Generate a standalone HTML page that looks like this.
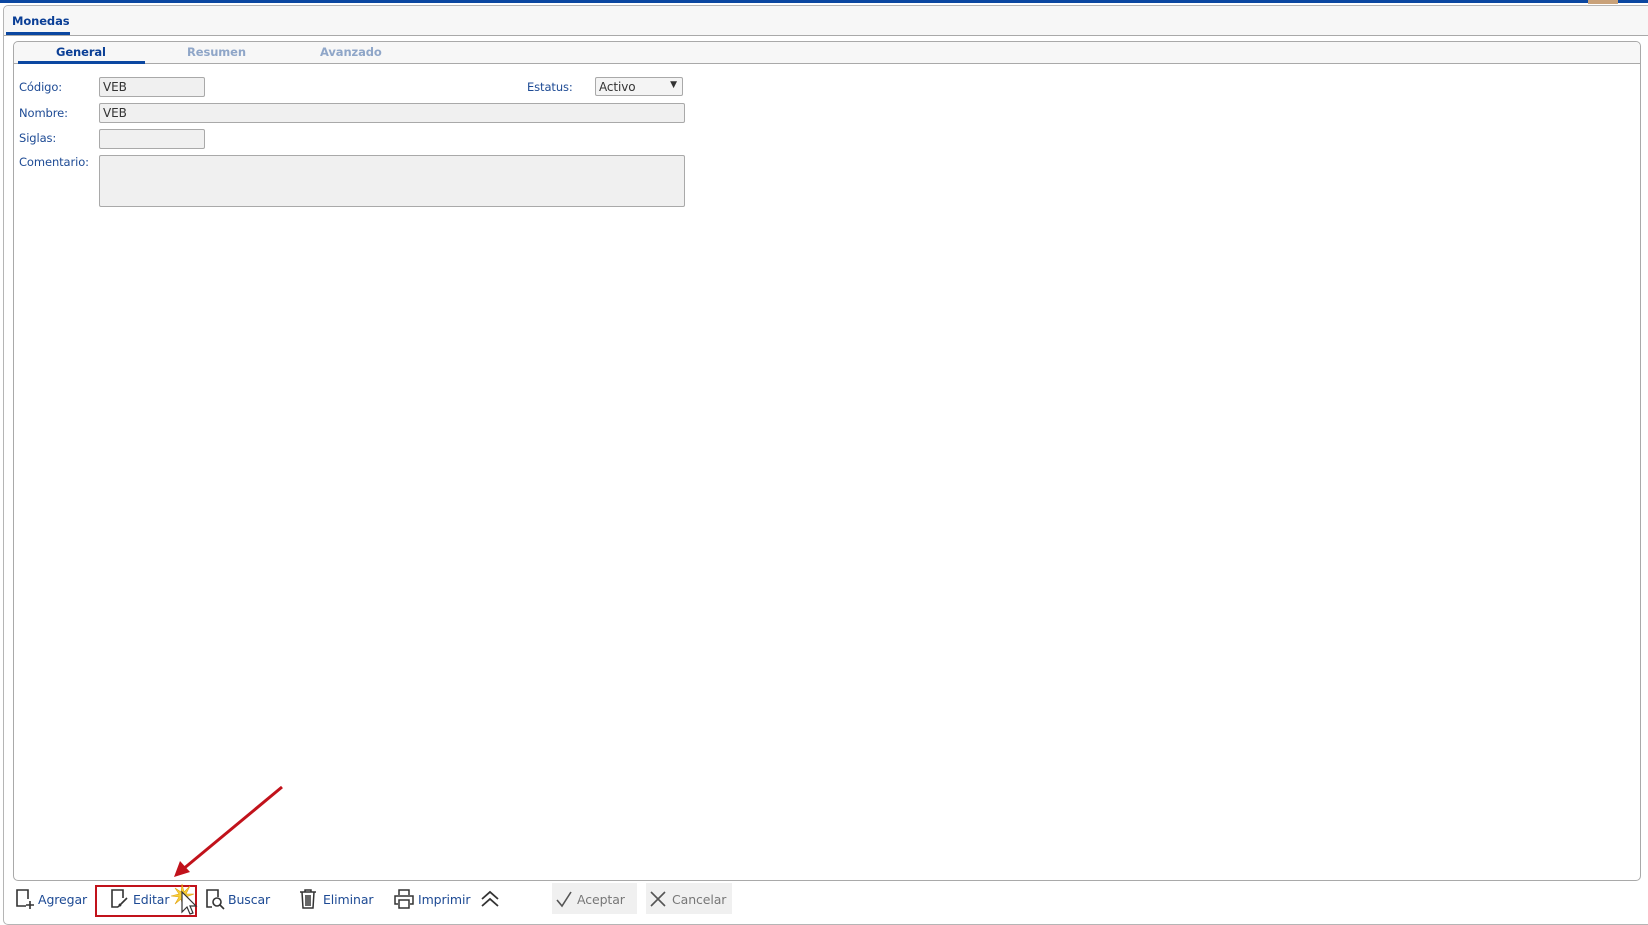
<!DOCTYPE html><html><head><meta charset="utf-8"><style>
*{margin:0;padding:0;box-sizing:border-box}
body{width:1648px;height:921px;background:#fff;position:relative;overflow:hidden;font-family:"DejaVu Sans","Liberation Sans",sans-serif;font-size:11.5px;color:#1d4a94;letter-spacing:-0.1px}
.a{position:absolute}
.inp{position:absolute;background:#f0f0f0;border:1px solid #a9a9a9;border-radius:2px;color:#333;font-size:12px;padding:2px 3px}
.lbl{position:absolute;left:19px;font-size:11.5px;color:#1d4a94}
.tb{position:absolute;top:892px;font-size:12.5px;color:#1d4a94}
</style></head><body>
<div class="a" style="left:0;top:0;width:1648px;height:3px;background:#0b47a1"></div>
<div class="a" style="left:1588px;top:0;width:30px;height:4px;background:#c9a27a"></div>
<div class="a" style="left:3px;top:5px;width:1650px;height:920px;border:1px solid #b5b5b5;border-radius:5px;background:#fff"></div>
<div class="a" style="left:4px;top:6px;width:1644px;height:30px;background:#f7f7f7;border-bottom:1px solid #a9a9a9;border-radius:5px 0 0 0"></div>
<div class="a" style="left:12px;top:14px;font-weight:bold;font-size:11.5px;color:#0b3f96">Monedas</div>
<div class="a" style="left:6px;top:32px;width:64px;height:3px;background:#0b47a1"></div>
<div class="a" style="left:13px;top:41px;width:1628px;height:840px;border:1px solid #a9a9a9;border-radius:5px"></div>
<div class="a" style="left:14px;top:42px;width:1626px;height:22px;background:#f7f7f7;border-bottom:1px solid #a9a9a9;border-radius:5px 5px 0 0"></div>
<div class="a" style="left:56px;top:45px;font-weight:bold;font-size:11.5px;color:#0b3f96">General</div>
<div class="a" style="left:187px;top:45px;font-weight:bold;font-size:11.5px;color:#8fa6c8">Resumen</div>
<div class="a" style="left:320px;top:45px;font-weight:bold;font-size:11.5px;color:#8fa6c8">Avanzado</div>
<div class="a" style="left:18px;top:61px;width:127px;height:3px;background:#0b47a1"></div>
<div class="lbl" style="top:80px">Código:</div>
<div class="lbl" style="top:106px">Nombre:</div>
<div class="lbl" style="top:131px">Siglas:</div>
<div class="lbl" style="top:155px">Comentario:</div>
<div class="inp" style="left:99px;top:77px;width:106px;height:20px">VEB</div>
<div class="inp" style="left:99px;top:103px;width:586px;height:20px">VEB</div>
<div class="inp" style="left:99px;top:129px;width:106px;height:20px"></div>
<div class="inp" style="left:99px;top:155px;width:586px;height:52px"></div>
<div class="a" style="left:527px;top:80px">Estatus:</div>
<div class="inp" style="left:595px;top:77px;width:88px;height:19px;background:#f4f4f4">Activo<span style="position:absolute;right:5px;top:2px;font-size:9px">▼</span></div>
<svg class="a" style="left:14px;top:888px" width="22" height="22" viewBox="0 0 22 22" fill="none" stroke="#333" stroke-width="1.6"><path d="M12 18H3V2h11v9"/><path d="M16 13v8M12 17h8"/></svg>
<div class="tb" style="left:38px">Agregar</div>
<div class="a" style="left:95px;top:885px;width:102px;height:32px;border:2px solid #c1121b"></div>
<svg class="a" style="left:109px;top:888px" width="22" height="22" viewBox="0 0 22 22" fill="none" stroke="#333" stroke-width="1.6"><path d="M9 19H3V2h11v8"/><path d="M9 19l9-9M10 16l2 2"/></svg>
<div class="tb" style="left:133px">Editar</div>
<svg class="a" style="left:170px;top:880px" width="30" height="36" viewBox="0 0 30 36"><path d="M12 4l2 8 6-6-4 8 8 0-8 3 5 6-7-4-1 8-2-8-6 5 4-7-8-1 8-2-4-6 6 4z" fill="#f8d23a" stroke="#e0a010" stroke-width=".6"/><path d="M12 12v20l5-5 3 7 3-1-3-7h6z" fill="#fff" stroke="#333" stroke-width="1.2"/></svg>
<svg class="a" style="left:204px;top:888px" width="22" height="22" viewBox="0 0 22 22" fill="none" stroke="#333" stroke-width="1.6"><path d="M8 19H3V2h11v7"/><circle cx="13" cy="14" r="4"/><path d="M16 17l4 4"/></svg>
<div class="tb" style="left:228px">Buscar</div>
<svg class="a" style="left:298px;top:888px" width="20" height="22" viewBox="0 0 20 22" fill="none" stroke="#333" stroke-width="1.5"><path d="M2 4h16M7 4V2h6v2M4 4l1 16h10l1-16M8 7v11M10 7v11M12 7v11"/></svg>
<div class="tb" style="left:323px">Eliminar</div>
<svg class="a" style="left:393px;top:888px" width="22" height="22" viewBox="0 0 22 22" fill="none" stroke="#333" stroke-width="1.5"><path d="M6 7V2h10v5M5 16H2V8h18v8h-3M6 12h10v8H6z"/></svg>
<div class="tb" style="left:418px">Imprimir</div>
<svg class="a" style="left:479px;top:890px" width="22" height="18" viewBox="0 0 22 18" fill="none" stroke="#333" stroke-width="1.8"><path d="M3 9l8-7 8 7M3 16l8-7 8 7"/></svg>
<div class="a" style="left:552px;top:883px;width:85px;height:31px;background:#f0f0f0"></div>
<svg class="a" style="left:555px;top:890px" width="18" height="18" viewBox="0 0 18 18" fill="none" stroke="#555" stroke-width="1.6"><path d="M2 10l5 6L16 2"/></svg>
<div class="tb" style="left:577px;color:#777">Aceptar</div>
<div class="a" style="left:646px;top:883px;width:86px;height:31px;background:#f0f0f0"></div>
<svg class="a" style="left:649px;top:890px" width="18" height="18" viewBox="0 0 18 18" fill="none" stroke="#555" stroke-width="1.6"><path d="M2 2l14 14M16 2L2 16"/></svg>
<div class="tb" style="left:672px;color:#777">Cancelar</div>
<svg class="a" style="left:160px;top:780px" width="130" height="105" viewBox="0 0 130 105"><path d="M122 7L22 90" stroke="#c1121b" stroke-width="3"/><path d="M14 97l6-16 10 11z" fill="#c1121b"/></svg>
</body></html>
